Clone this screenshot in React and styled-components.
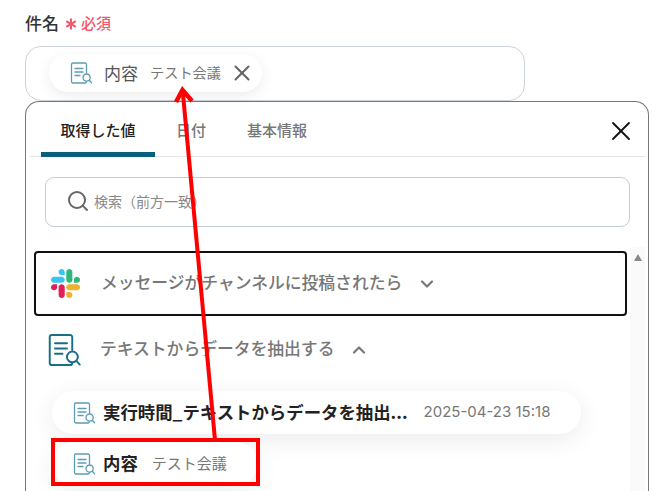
import React from 'react'
import styled, { createGlobalStyle } from 'styled-components'
import { X, ChevronDown, ChevronUp, Search } from 'lucide-react'

const GlobalStyle = createGlobalStyle`
  html, body {
    margin: 0;
    height: 100%;
    overflow: hidden;
    background: #fff;
  }
  * { box-sizing: border-box; }
`

const Page = styled.div`
  position: relative;
  width: 668px;
  height: 491px;
  overflow: hidden;
  padding: 12px 19px 0 25px;
  font-family: 'Noto Sans CJK JP', 'Noto Sans', sans-serif;
  color: #333;
`

const Label = styled.div`
  display: flex;
  align-items: center;
  height: 21px;
  font-size: 17px;
  font-weight: 500;
  color: #333;
`

const Required = styled.span`
  display: flex;
  align-items: center;
  margin-left: 6px;
  font-size: 15px;
  font-weight: 500;
  color: #f4566a;
`

const Star = styled.svg`
  margin-right: 4px;
  margin-top: 2px;
`

const Field = styled.div`
  width: 500px;
  height: 55px;
  margin-top: 13px;
  padding: 7px 0 0 23px;
  border: 1px solid #cbd2d9;
  border-radius: 16px;
`

const Chip = styled.div`
  display: inline-flex;
  align-items: center;
  height: 38px;
  padding: 0 7px 0 20px;
  border-radius: 19px;
  background: #fff;
  box-shadow: 0 4px 14px rgba(0, 0, 0, 0.08);
`

const ChipName = styled.span`
  margin-left: 11px;
  padding-bottom: 2px;
  font-size: 17px;
  color: #555;
`

const ChipValue = styled.span`
  margin-left: 12px;
  padding-bottom: 2px;
  font-size: 14.2px;
  color: #777;
`

const ChipClose = styled(X)`
  margin-left: 8px;
  color: #666;
`

const Panel = styled.div`
  height: 420px;
  border: 1px solid #777;
  border-bottom: 0;
  border-radius: 14px 14px 0 0;
  padding: 0 3px 0 4px;
`

const Tabs = styled.div`
  display: flex;
  align-items: stretch;
  height: 55px;
  border-bottom: 1px solid #e3e5e8;
  padding-left: 11px;
`

const Tab = styled.div`
  width: ${(p) => p.$width}px;
  padding-top: 5px;
  display: flex;
  align-items: center;
  justify-content: center;
  font-size: 15px;
  font-weight: 500;
  color: ${(p) => (p.$active ? '#222' : '#777')};
  border-bottom: ${(p) => (p.$active ? '5px solid #08617c' : '5px solid transparent')};
  border-radius: 5px 5px 0 0;
  margin-bottom: -1px;
`

const TabClose = styled(X)`
  margin-left: auto;
  margin-right: 8px;
  margin-top: 13px;
  color: #111;
`

const SearchBox = styled.div`
  display: flex;
  align-items: center;
  width: 585px;
  height: 50px;
  margin: 20px 0 0 15px;
  padding: 0 0 3px 20px;
  border: 1px solid #c5ccd3;
  border-radius: 9px;
  font-size: 14px;
  color: #888;
`

const SearchIcon = styled(Search)`
  margin-right: 4px;
  color: #666;
`

const ListArea = styled.div`
  position: relative;
  margin-top: 24px;
  width: 615px;
`

const ScrollBar = styled.div`
  position: absolute;
  top: -4px;
  right: 0;
  width: 15px;
  height: 300px;
  background: #fafafa;
  display: flex;
  justify-content: center;
  padding-top: 7px;
`

const ScrollArrow = styled.div`
  width: 0;
  height: 0;
  border-left: 4.5px solid transparent;
  border-right: 4.5px solid transparent;
  border-bottom: 7px solid #8a8a8a;
`

const SelectedRow = styled.div`
  display: flex;
  align-items: center;
  width: 593px;
  height: 65px;
  margin-left: 4px;
  padding-left: 15px;
  border: 2px solid #111;
  border-radius: 4px;
`

const PlainRow = styled.div`
  display: flex;
  align-items: center;
  height: 67px;
  margin-left: 4px;
  padding-left: 12px;
`

const GroupTitle = styled.span`
  margin-left: ${(p) => p.$gap}px;
  padding-bottom: 3px;
  font-size: 16.8px;
  font-weight: 500;
  color: #777;
`

const Toggle = styled.span`
  display: flex;
  margin-left: 15px;
  color: #777;
`

const ValueList = styled.div`
  display: flex;
  flex-direction: column;
  gap: 8px;
  margin: 8px 0 0 22px;
`

const ValueChip = styled.div`
  display: inline-flex;
  align-items: center;
  align-self: flex-start;
  height: 43px;
  padding: 0 31px 0 20px;
  border-radius: 22px;
  background: #fff;
  box-shadow: 0 6px 24px rgba(0, 0, 0, 0.08);
`

const ValueName = styled.span`
  margin-left: 7px;
  padding-bottom: 3px;
  font-size: 17.4px;
  font-weight: 700;
  color: #222;
`

const ValueMeta = styled.span`
  margin-left: ${(p) => p.$gap}px;
  padding-bottom: 3px;
  font-size: ${(p) => p.$size}px;
  font-family: ${(p) => (p.$latin ? "Inter, 'Noto Sans', sans-serif" : 'inherit')};
  color: #777;
`

const Arrow = styled.svg`
  position: absolute;
  left: 0;
  top: 0;
  pointer-events: none;
`

const Highlight = styled.div`
  position: absolute;
  left: 51px;
  top: 438px;
  width: 209px;
  height: 48px;
  border: 4px solid #f00;
`

const DocIcon = ({ size = 24, color = '#5c9db2' }) => (
  <svg width={size} height={size} viewBox="0 0 24 24" fill="none" stroke={color} strokeWidth="1.3" strokeLinecap="round">
    <path d="M17.5 12V3.4c0-.8-.6-1.4-1.4-1.4H3.9c-.8 0-1.4.6-1.4 1.4v17.2c0 .8.6 1.4 1.4 1.4h12.2c.8 0 1.4-.6 1.4-1.4V20" />
    <path d="M6 7.5h8M6 11h8M6 14.5h5" />
    <circle cx="17.6" cy="16.6" r="3.6" fill="#fff" />
    <path d="M20.3 19.3l2.2 2.4" />
  </svg>
)

const SlackLogo = () => (
  <svg width="29" height="29" viewBox="0 0 122.8 122.8">
    <path fill="#E01E5A" d="M25.8 77.6c0 7.1-5.8 12.9-12.9 12.9S0 84.7 0 77.6s5.8-12.9 12.9-12.9h12.9v12.9z" />
    <path fill="#E01E5A" d="M32.3 77.6c0-7.1 5.8-12.9 12.9-12.9s12.9 5.8 12.9 12.9v32.3c0 7.1-5.8 12.9-12.9 12.9s-12.9-5.8-12.9-12.9V77.6z" />
    <path fill="#36C5F0" d="M45.2 25.8c-7.1 0-12.9-5.8-12.9-12.9S38.1 0 45.2 0s12.9 5.8 12.9 12.9v12.9H45.2z" />
    <path fill="#36C5F0" d="M45.2 32.3c7.1 0 12.9 5.8 12.9 12.9s-5.8 12.9-12.9 12.9H12.9C5.8 58.1 0 52.3 0 45.2s5.8-12.9 12.9-12.9h32.3z" />
    <path fill="#2EB67D" d="M97 45.2c0-7.1 5.8-12.9 12.9-12.9s12.9 5.8 12.9 12.9-5.8 12.9-12.9 12.9H97V45.2z" />
    <path fill="#2EB67D" d="M90.5 45.2c0 7.1-5.8 12.9-12.9 12.9s-12.9-5.8-12.9-12.9V12.9C64.7 5.8 70.5 0 77.6 0s12.9 5.8 12.9 12.9v32.3z" />
    <path fill="#ECB22E" d="M77.6 97c7.1 0 12.9 5.8 12.9 12.9s-5.8 12.9-12.9 12.9-12.9-5.8-12.9-12.9V97h12.9z" />
    <path fill="#ECB22E" d="M77.6 90.5c-7.1 0-12.9-5.8-12.9-12.9s5.8-12.9 12.9-12.9h32.3c7.1 0 12.9 5.8 12.9 12.9s-5.8 12.9-12.9 12.9H77.6z" />
  </svg>
)

const App = () => (
  <Page>
    <GlobalStyle />
    <Label>
      件名
      <Required>
        <Star width="12" height="12" viewBox="0 0 12 12" stroke="#f4566a" strokeWidth="2">
          <path d="M6 .5v11M1.2 3.2l9.6 5.6M10.8 3.2l-9.6 5.6" />
        </Star>
        必須
      </Required>
    </Label>
    <Field>
      <Chip>
        <DocIcon />
        <ChipName>内容</ChipName>
        <ChipValue>テスト会議</ChipValue>
        <ChipClose size={26} strokeWidth={1.9} />
      </Chip>
    </Field>
    <Panel>
      <Tabs>
        <Tab $active $width={114}>取得した値</Tab>
        <Tab $width={72}>日付</Tab>
        <Tab $width={100}>基本情報</Tab>
        <TabClose size={32} strokeWidth={1.4} />
      </Tabs>
      <SearchBox>
        <SearchIcon size={24} strokeWidth={2} />
        検索（前方一致）
      </SearchBox>
      <ListArea>
        <ScrollBar>
          <ScrollArrow />
        </ScrollBar>
        <SelectedRow>
          <SlackLogo />
          <GroupTitle $gap={21}>メッセージがチャンネルに投稿されたら</GroupTitle>
          <Toggle>
            <ChevronDown size={20} strokeWidth={2.6} />
          </Toggle>
        </SelectedRow>
        <PlainRow>
          <DocIcon size={36} color="#1a6f88" />
          <GroupTitle $gap={18}>テキストからデータを抽出する</GroupTitle>
          <Toggle>
            <ChevronUp size={20} strokeWidth={2.6} />
          </Toggle>
        </PlainRow>
        <ValueList>
          <ValueChip>
            <DocIcon />
            <ValueName>実行時間_テキストからデータを抽出...</ValueName>
            <ValueMeta $gap={16} $size={15} $latin>2025-04-23 15:18</ValueMeta>
          </ValueChip>
          <ValueChip>
            <DocIcon />
            <ValueName>内容</ValueName>
            <ValueMeta $gap={14} $size={15}>テスト会議</ValueMeta>
          </ValueChip>
        </ValueList>
      </ListArea>
    </Panel>
    <Arrow width="668" height="491" viewBox="0 0 668 491">
      <path d="M215 440L183 94" stroke="#f00" strokeWidth="4" fill="none" />
      <path d="M176 102L182.5 90L192 101" stroke="#f00" strokeWidth="4.5" fill="none" />
    </Arrow>
    <Highlight />
  </Page>
)

export default App
